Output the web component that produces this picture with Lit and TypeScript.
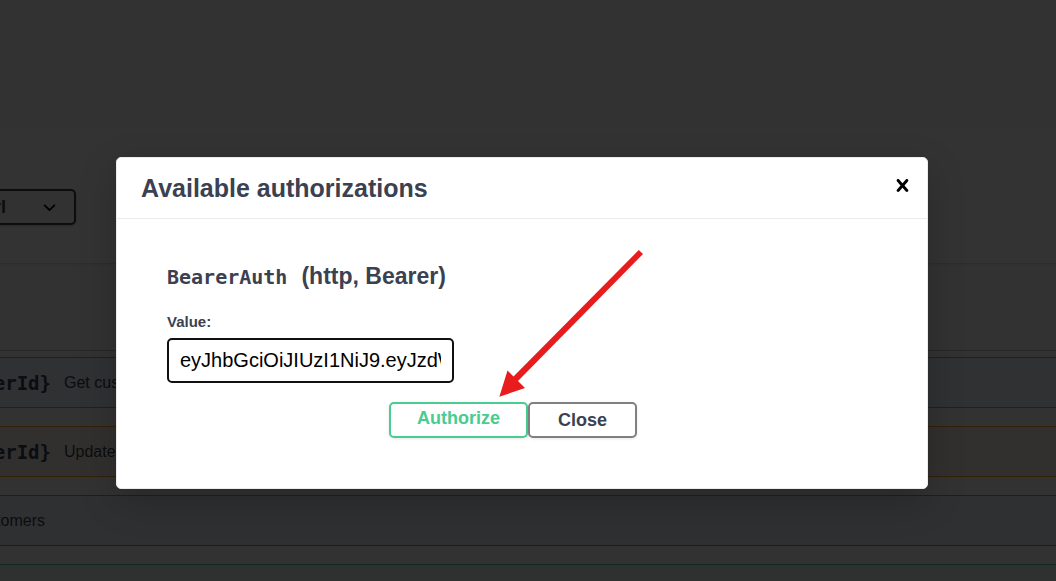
import { LitElement, html, css, svg } from "lit";
import { customElement, property, state } from "lit/decorators.js";
import { classMap } from "lit/directives/class-map.js";

interface Operation {
  kind: string;
  path: string;
  summary: string;
}

const OPERATIONS: Operation[] = [
  { kind: "get", path: "/{customerId}", summary: "Get customer" },
  { kind: "put", path: "/{customerId}", summary: "Update" },
  { kind: "list", path: "", summary: "customers" },
  { kind: "post", path: "", summary: "" },
];

@customElement("api-page")
class ApiPage extends LitElement {
  static styles = css`
    :host {
      display: block;
      color: #3b4151;
      background: #fafafa;
      min-height: 100%;
    }
    .info {
      height: 127px;
    }
    .servers {
      display: flex;
      align-items: center;
      height: 136px;
      box-sizing: border-box;
      background: #fff;
      box-shadow: 0 1px 2px rgba(0, 0, 0, 0.15);
      padding-top: 24px;
    }
    .select-wrap {
      display: grid;
      align-items: center;
      width: 316px;
      margin-left: -240px;
    }
    .select-wrap > * {
      grid-area: 1 / 1;
    }
    select {
      appearance: none;
      height: 36px;
      width: 100%;
      padding: 0 68px 0 12px;
      border: 2px solid #41444e;
      border-radius: 5px;
      background: #f7f7f7;
      color: #3b4151;
      font: bold 18px "Liberation Sans", Arial, sans-serif;
      text-align-last: right;
      box-shadow: 0 1px 3px rgba(0, 0, 0, 0.25);
    }
    .chevron {
      justify-self: end;
      width: 25px;
      height: 25px;
      margin-right: 14px;
      pointer-events: none;
    }
    .tag {
      height: 87px;
      border-bottom: 1px solid rgba(59, 65, 81, 0.3);
    }
    .operations {
      display: grid;
      gap: 18px;
      padding-top: 6px;
    }
    .operation {
      display: flex;
      align-items: center;
      gap: 13px;
      height: 51px;
      box-sizing: border-box;
      border: solid;
      border-width: 1px 0;
      white-space: nowrap;
    }
    .path {
      display: flex;
      justify-content: flex-end;
      width: 51px;
      font: bold 19px "DejaVu Sans Mono", monospace;
    }
    .summary {
      font: 16px "Liberation Sans", Arial, sans-serif;
    }
    .get {
      border-color: #61affe;
      background: #ebf3fb;
    }
    .put {
      border-color: #fca130;
      background: #fbf1e6;
    }
    .list {
      border-color: #6aa5d0;
      background: #ebf0f5;
    }
    .list .path {
      display: none;
    }
    .list .summary {
      display: flex;
      justify-content: flex-end;
      width: 45px;
    }
    .post {
      border-color: #49cc90;
      background: #e8f6f0;
    }
  `;

  render() {
    return html`
      <div class="info"></div>
      <div class="servers">
        <div class="select-wrap">
          <select aria-label="Servers">
            <option>Server url</option>
          </select>
          <svg class="chevron" viewBox="0 0 20 20" aria-hidden="true">
            <path d="M13.418 7.859c.271-.268.709-.268.978 0 .27.268.272.701 0 .969l-3.908 3.83c-.27.268-.707.268-.979 0l-3.908-3.83c-.27-.267-.27-.701 0-.969.271-.268.709-.268.978 0L10 11l3.418-3.141z" />
          </svg>
        </div>
      </div>
      <div class="tag"></div>
      <div class="operations">
        ${OPERATIONS.map(
          (op) => html`
            <div class=${classMap({ operation: true, [op.kind]: true })}>
              <span class="path">${op.path}</span>
              <span class="summary">${op.summary}</span>
            </div>
          `
        )}
      </div>
    `;
  }
}

@customElement("auth-dialog")
class AuthDialog extends LitElement {
  @property() scheme = "BearerAuth";
  @state() private value = "eyJhbGciOiJIUzI1NiJ9.eyJzdWIiOiJhZG1pbiJ9";

  static styles = css`
    :host {
      display: block;
      width: 100%;
      max-width: 812px;
      box-sizing: border-box;
      border: 1px solid #ebebeb;
      border-radius: 5px;
      background: #fff;
      color: #3b4151;
      font-family: "Liberation Sans", Arial, sans-serif;
      box-shadow: 0 12px 38px rgba(0, 0, 0, 0.2);
    }
    header {
      display: flex;
      align-items: center;
      justify-content: space-between;
      height: 60px;
      padding: 0 12px 0 24px;
      border-bottom: 1px solid #ebebeb;
    }
    h3 {
      margin: 0;
      font-size: 25px;
      line-height: 30px;
    }
    .close-icon {
      display: flex;
      padding: 0;
      border: 0;
      background: none;
      margin-bottom: 5px;
    }
    .close-icon svg {
      width: 25px;
      height: 25px;
    }
    form {
      padding: 42px 50px 50px;
    }
    h4 {
      display: flex;
      align-items: baseline;
      gap: 14px;
      margin: 0;
      font-size: 23px;
      line-height: 30px;
    }
    code {
      font: bold 20px "DejaVu Sans Mono", monospace;
    }
    label {
      display: block;
      margin: 22px 0 7px;
      font-size: 15px;
      font-weight: bold;
      line-height: 18px;
    }
    input {
      display: block;
      width: 287px;
      height: 45px;
      box-sizing: border-box;
      padding: 0 11px;
      border: 2px solid #101010;
      border-radius: 5px;
      outline: none;
      background: #fff;
      color: #000;
      font: 20px "Liberation Sans", Arial, sans-serif;
    }
    .actions {
      display: flex;
      justify-content: center;
      margin-top: 19px;
      padding-right: 18px;
    }
    .btn {
      height: 36px;
      padding: 0 28px;
      border: 2px solid #808080;
      border-radius: 5px;
      background: #fff;
      color: #3b4151;
      font: bold 18px "Liberation Sans", Arial, sans-serif;
      box-shadow: 0 1px 3px rgba(0, 0, 0, 0.1);
    }
    .authorize {
      padding: 0 26px 4px;
      border-color: #49cc90;
      color: #49cc90;
    }
  `;

  render() {
    return html`
      <header>
        <h3>Available authorizations</h3>
        <button class="close-icon" type="button" aria-label="Close dialog">
          <svg viewBox="0 0 20 20" aria-hidden="true">
            <path d="M14.348 14.849c-.469.469-1.229.469-1.697 0L10 11.819l-2.651 3.029c-.469.469-1.229.469-1.697 0-.469-.469-.469-1.229 0-1.697l2.758-3.15-2.759-3.152c-.469-.469-.469-1.228 0-1.697.469-.469 1.228-.469 1.697 0L10 8.183l2.651-3.031c.469-.469 1.228-.469 1.697 0 .469.469.469 1.229 0 1.697l-2.758 3.152 2.758 3.15c.469.469.469 1.229 0 1.698z" />
          </svg>
        </button>
      </header>
      <form @submit=${(e: Event) => e.preventDefault()}>
        <h4><code>${this.scheme}</code><span>(http, Bearer)</span></h4>
        <label for="token">Value:</label>
        <input
          id="token"
          type="text"
          .value=${this.value}
          @input=${(e: Event) => (this.value = (e.target as HTMLInputElement).value)}
        />
        <div class="actions">
          <button class="btn authorize" type="submit">Authorize</button>
          <button class="btn" type="button">Close</button>
        </div>
      </form>
    `;
  }
}

@customElement("app-root")
class AppRoot extends LitElement {
  static styles = css`
    :host {
      display: block;
      position: relative;
      height: 100vh;
      overflow: hidden;
    }
    .overlay {
      position: absolute;
      inset: 0;
      display: flex;
      justify-content: center;
      align-items: flex-start;
      padding: 157px 12px 0 0;
      background: rgba(0, 0, 0, 0.8);
    }
    .dialog {
      position: relative;
      width: 100%;
      max-width: 812px;
    }
    .pointer {
      position: absolute;
      left: 380px;
      top: 90px;
      width: 150px;
      height: 155px;
      fill: #e81c1c;
      pointer-events: none;
    }
  `;

  render() {
    return html`
      <api-page></api-page>
      <div class="overlay">
        <div class="dialog">
          <auth-dialog></auth-dialog>
          <svg class="pointer" viewBox="0 0 150 155" aria-hidden="true">
            ${svg`
              <path d="M142.8 3L147 7L21 135L16.5 130.5Z" />
              <path d="M3.3 149.8L11.5 123.5L29 141Z" />
            `}
          </svg>
        </div>
      </div>
    `;
  }
}
